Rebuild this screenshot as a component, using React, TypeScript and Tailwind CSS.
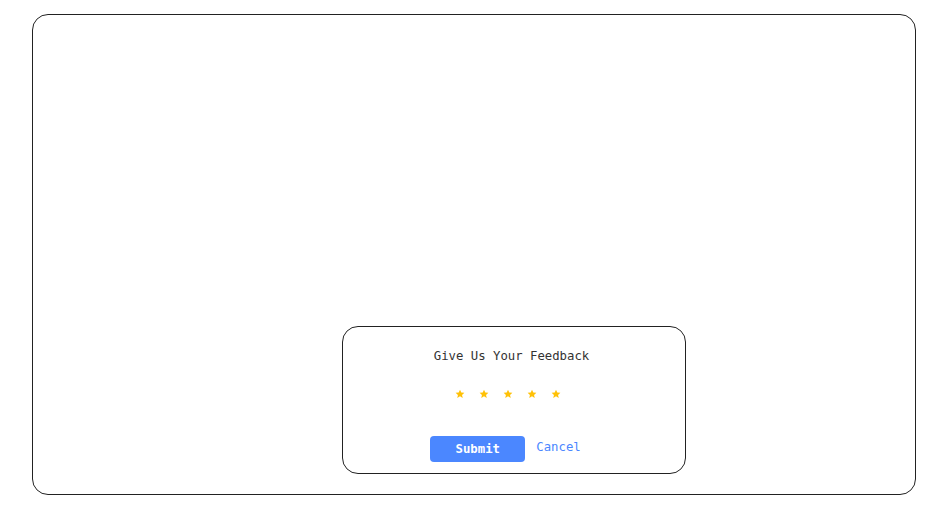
import React from "react";

const Star = () => (
  <svg width="10" height="10" viewBox="0 0 24 24" className="block">
    <path
      d="M12 1.5l3.1 6.9 7.4.7-5.6 5 1.7 7.4L12 17.6l-6.6 3.9 1.7-7.4-5.6-5 7.4-.7z"
      fill="#FFC107"
    />
  </svg>
);

export default function App() {
  const mono = { fontFamily: '"DejaVu Sans Mono", "Liberation Mono", monospace' };
  return (
    <div className="w-[952px] h-[517px] bg-white pt-[14px] pl-[32px]" style={mono}>
      <div className="w-[884px] h-[481px] border border-[#222] rounded-[16px] flex flex-col justify-end pb-[20px] pl-[309px]">
        <div className="w-[344px] h-[148px] border border-[#222] rounded-[16px] flex flex-col items-center pt-[21px]">
          <div className="text-[12.3px] leading-4 text-[#333] mr-[5px]">Give Us Your Feedback</div>
          <div className="flex gap-[14px] mt-[25px] mr-[13px]">
            <Star />
            <Star />
            <Star />
            <Star />
            <Star />
          </div>
          <div className="flex items-start mt-[37px] mr-[17px]">
            <button className="w-[95px] h-[26px] rounded-[4px] bg-[#4b87ff] text-white text-[12.3px] font-bold leading-4">
              Submit
            </button>
            <button className="ml-[11px] mt-[3px] text-[12.3px] leading-4 text-[#4b87ff]">Cancel</button>
          </div>
        </div>
      </div>
    </div>
  );
}
